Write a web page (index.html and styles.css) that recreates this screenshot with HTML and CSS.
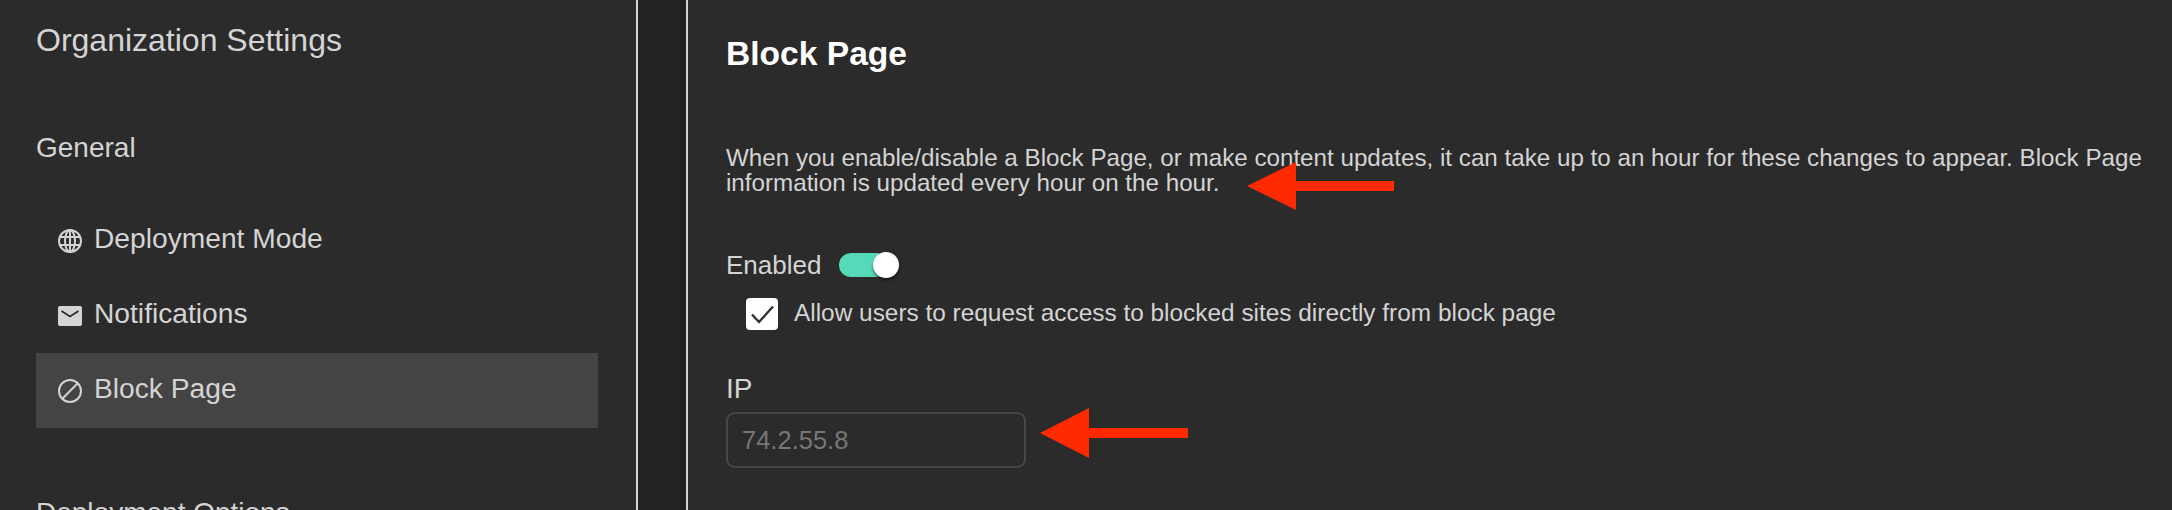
FILE: index.html
```html
<!DOCTYPE html>
<html lang="en">
<head>
<meta charset="utf-8">
<title>Block Page</title>
<link rel="stylesheet" href="styles.css">
</head>
<body>
<div class="page">
  <aside class="sidebar">
    <h1 class="side-title">Organization Settings</h1>
    <h2 class="side-group">General</h2>
    <nav class="side-nav">
      <a class="side-item">
        <svg class="side-icon" viewBox="0 0 24 24" fill="none" stroke="currentColor" stroke-width="2"><circle cx="12" cy="12" r="11"/><ellipse cx="12" cy="12" rx="5" ry="11"/><path d="M12 1v22M2 8h20M2 16h20"/></svg>
        <span>Deployment Mode</span>
      </a>
      <a class="side-item">
        <svg class="side-icon" viewBox="0 0 24 24"><path fill="currentColor" d="M2 2h20a2 2 0 0 1 2 2v16a2 2 0 0 1-2 2H2a2 2 0 0 1-2-2V4a2 2 0 0 1 2-2z"/><path fill="none" stroke="#2b2b2b" stroke-width="1.8" d="M3.500 7l8.500 5.500 8.500-5.500"/></svg>
        <span>Notifications</span>
      </a>
      <a class="side-item is-active">
        <svg class="side-icon" viewBox="0 0 24 24" fill="none" stroke="currentColor" stroke-width="2"><circle cx="12" cy="12" r="11"/><path d="M20 4L4 20"/></svg>
        <span>Block Page</span>
      </a>
    </nav>
    <h2 class="side-group side-group-next">Deployment Options</h2>
  </aside>
  <div class="gutter"></div>
  <main class="content">
    <h2 class="content-title">Block Page</h2>
    <div class="note-row">
      <p class="note">When you enable/disable a Block Page, or make content updates, it can take up to an hour for these changes to appear. Block Page information is updated every hour on the hour.</p>
      <svg class="arrow arrow-note" viewBox="0 0 147 48"><path d="M0 24L49 0V19H147V29H49V48z"/></svg>
    </div>
    <div class="enabled-row">
      <span class="enabled-label">Enabled</span>
      <span class="switch"><span class="switch-knob"></span></span>
    </div>
    <label class="check-row">
      <span class="check-box"><svg viewBox="0 0 32 32" fill="none" stroke="#333" stroke-width="2.4"><path d="M6 16.500l7 7.500L27 8.500"/></svg></span>
      <span class="check-text">Allow users to request access to blocked sites directly from block page</span>
    </label>
    <div class="ip-label">IP</div>
    <div class="ip-row">
      <div class="ip-input">74.2.55.8</div>
      <svg class="arrow arrow-ip" viewBox="0 0 148 50"><path d="M0 25L49 0V20H148V30H49V50z"/></svg>
    </div>
  </main>
</div>
</body>
</html>
```
FILE: styles.css
```css
* { box-sizing: border-box; }
html, body { margin: 0; height: 100%; overflow: hidden; background: #2b2b2b; }
body { font-family: "Liberation Sans", Arial, sans-serif; color: #d4d4d4; }
.page { display: flex; height: 510px; overflow: hidden; }

.sidebar { width: 638px; flex: none; padding: 0 38px 0 36px; border-right: 2px solid #d2d2d2; }
.side-title { margin: 0; padding-top: 22px; font-size: 32px; line-height: 36px; font-weight: 400; }
.side-group { margin: 0; font-size: 28px; line-height: 32px; font-weight: 400; }
.sidebar > .side-group { margin-top: 74px; }
.side-nav { display: flex; flex-direction: column; margin-top: 39px; }
.side-item { display: flex; align-items: center; gap: 12px; height: 75px; padding-left: 22px; font-size: 28.2px; }
.side-item span { position: relative; top: -2px; }
.side-item.is-active { background: #444; }
.side-icon { width: 24px; height: 24px; flex: none; overflow: visible; }
.sidebar > .side-group-next { margin-top: 69px; }

.gutter { width: 50px; flex: none; background: #222; border-right: 2px solid #d2d2d2; }

.content { flex: 1; min-width: 0; padding: 35px 0 0 38px; }
.content-title { margin: 0; font-size: 33.6px; line-height: 38px; font-weight: 700; color: #fff; }
.note-row { position: relative; margin-top: 72px; }
.note { margin: 0; width: 1432px; font-size: 24.2px; line-height: 25px; }
.arrow { display: block; fill: #ff2a00; position: absolute; }
.arrow-note { left: 521px; top: 17px; width: 147px; height: 48px; }

.enabled-row { display: flex; align-items: center; gap: 18px; margin-top: 57px; height: 26px; }
.enabled-label { font-size: 26px; line-height: 26px; }
.switch { position: relative; display: block; width: 60px; height: 24px; }
.switch::before { content: ""; position: absolute; left: 0; top: 0; width: 50px; height: 24px; border-radius: 12px; background: #55d9b8; }
.switch-knob { position: absolute; right: 0; top: -1px; width: 26px; height: 26px; border-radius: 50%; background: #fff; box-shadow: 0 2px 3px rgba(0,0,0,.55); }

.check-row { display: flex; align-items: center; gap: 16px; margin: 19px 0 0 20px; }
.check-box { display: block; width: 32px; height: 32px; border-radius: 4px; background: #fff; }
.check-box svg { display: block; width: 32px; height: 32px; }
.check-text { font-size: 24.4px; line-height: 32px; padding-bottom: 2px; }

.ip-label { margin-top: 42px; font-size: 28px; line-height: 32px; }
.ip-row { position: relative; margin-top: 7px; }
.ip-input { width: 300px; height: 56px; padding: 1px 0 0 14px; border: 2px solid #474747; border-radius: 9px; font-size: 25.5px; line-height: 51px; color: #777; }
.arrow-ip { left: 314px; top: -4px; width: 148px; height: 50px; }
```
